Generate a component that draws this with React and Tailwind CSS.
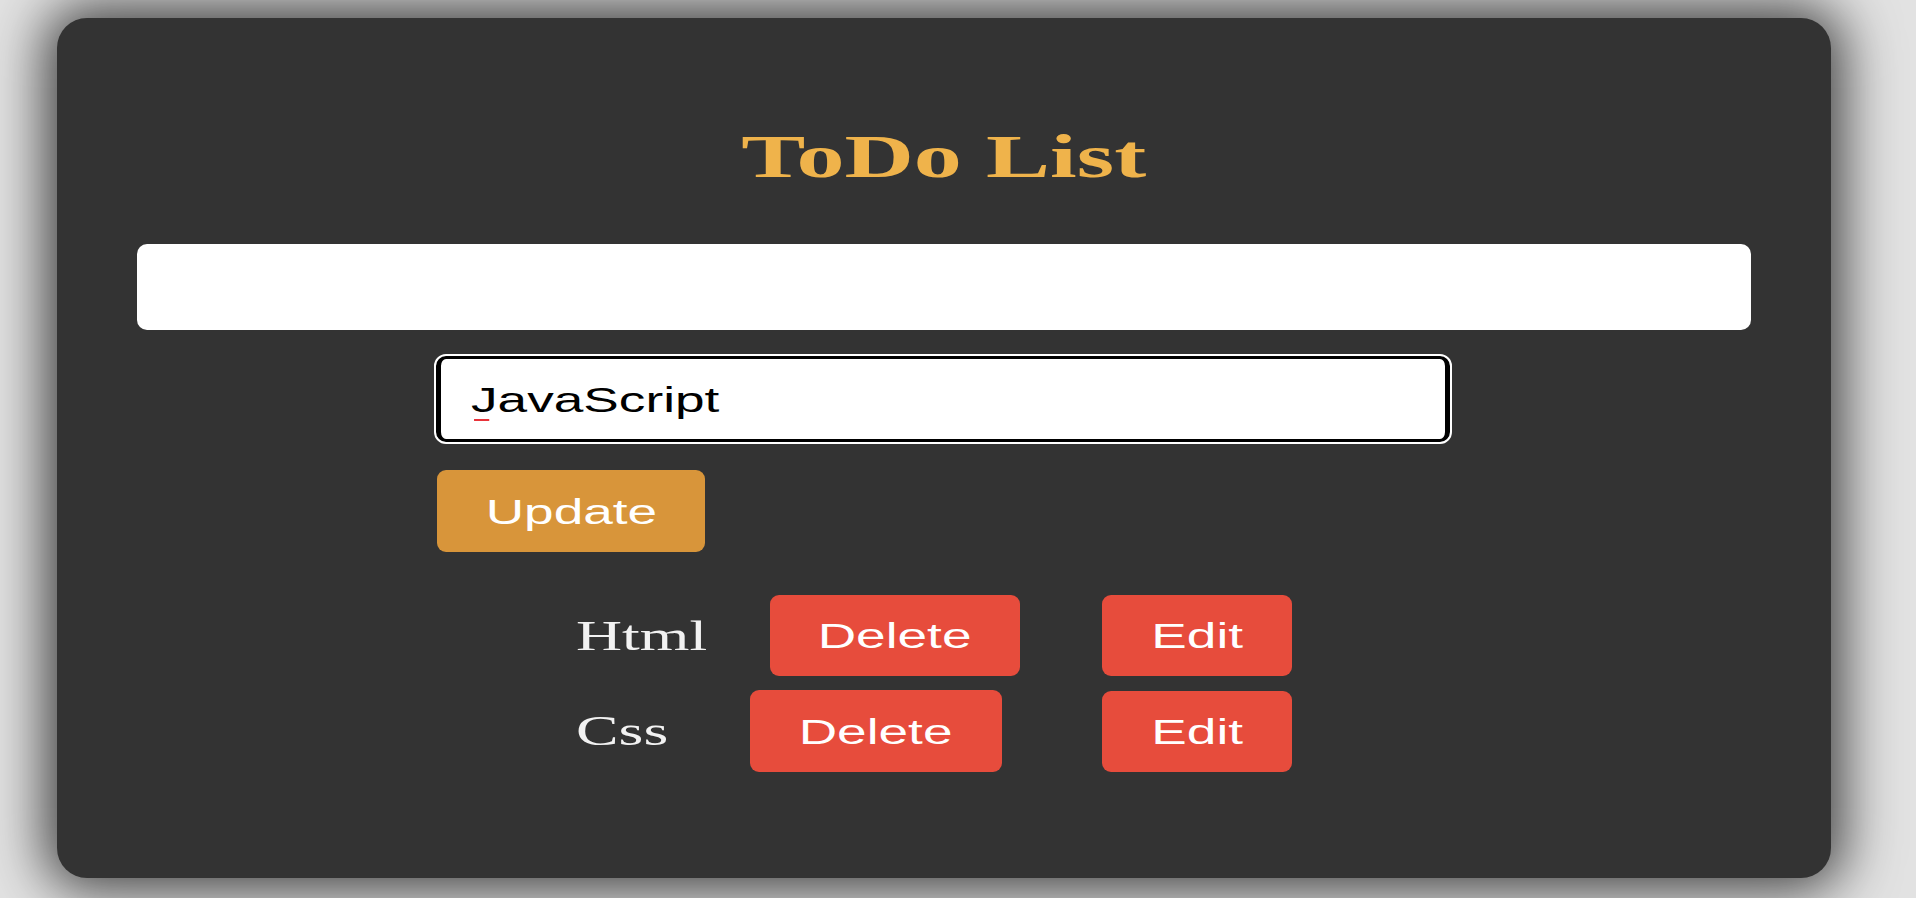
import { useState } from 'react';

const serif = { fontFamily: '"Liberation Serif", "Times New Roman", serif' };
const sans = { fontFamily: '"Liberation Sans", Arial, sans-serif' };

// the screenshot's text is drawn wide, so each text run is stretched on x
function Wide({ children, left = false, className = '' }) {
  return (
    <span
      className={`inline-block scale-x-[1.52] ${left ? 'origin-left' : 'origin-center'} ${className}`}
    >
      {children}
    </span>
  );
}

function RedButton({ label, width }) {
  return (
    <button
      type="button"
      className={`h-full ${width} flex items-center justify-center rounded-[9px] bg-[#e74c3c] text-[35px] leading-none text-white`}
      style={sans}
    >
      <Wide>{label}</Wide>
    </button>
  );
}

export default function App() {
  const [todos] = useState([
    { id: 1, title: 'Html', labelWidth: 'w-[194px]', deleteWidth: 'w-[250px]', gap: 'ml-[82px]', rowHeight: 'h-[81px]' },
    { id: 2, title: 'Css', labelWidth: 'w-[174px]', deleteWidth: 'w-[252px]', gap: 'ml-[100px]', rowHeight: 'h-[82px]' },
  ]);
  const [editText] = useState('JavaScript');

  return (
    <div className="h-screen w-full overflow-hidden bg-[#e2e2e2]">
      <div className="ml-[57px] mt-[18px] h-[860px] w-[1774px] rounded-[30px] bg-[#333333] px-[80px] pt-[107px] shadow-[0_0_55px_12px_rgba(0,0,0,0.72)]">
        <h1
          className="h-[62px] text-center text-[62px] font-bold leading-none text-[#efb34b]"
          style={serif}
        >
          <Wide className="scale-x-[1.55]">ToDo List</Wide>
        </h1>

        <input
          type="text"
          className="mt-[57px] block h-[86px] w-full rounded-[10px] border-0 bg-white px-4 outline-none"
          style={sans}
        />

        <div className="ml-[299px] mt-[26px] flex h-[86px] w-[1014px] items-center rounded-[10px] border-x-[5px] border-y-[3px] border-black bg-white pl-[30px] outline-2 outline-white">
          <span className="relative text-[35px] leading-none text-black" style={sans}>
            <Wide left>
              {editText}
              <span className="absolute left-[2px] top-[37px] h-[2px] w-[10px] bg-[#e8333a]"></span>
            </Wide>
          </span>
        </div>

        <button
          type="button"
          className="ml-[300px] mt-[28px] flex h-[82px] w-[268px] items-center justify-center rounded-[9px] bg-[#d8953a] text-[35px] leading-none text-white"
          style={sans}
        >
          <Wide>Update</Wide>
        </button>

        <div className="ml-[439px] mt-[43px] flex flex-col gap-[14px]">
          {todos.map((todo) => (
            <div key={todo.id} className={`flex ${todo.rowHeight} items-center`}>
              <div
                className={`${todo.labelWidth} text-[42px] leading-none text-[#f2f2f2]`}
                style={serif}
              >
                <Wide left>{todo.title}</Wide>
              </div>
              <RedButton label="Delete" width={todo.deleteWidth} />
              <div className={todo.gap}>
                <div className="h-[81px]">
                  <RedButton label="Edit" width="w-[190px]" />
                </div>
              </div>
            </div>
          ))}
        </div>
      </div>
    </div>
  );
}
